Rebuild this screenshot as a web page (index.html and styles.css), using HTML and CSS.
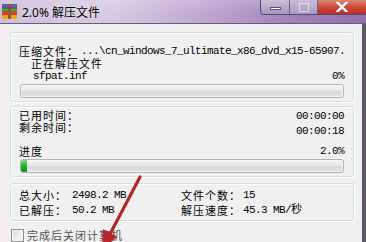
FILE: index.html
```html
<!DOCTYPE html>
<html lang="zh-CN">
<head>
    <meta charset="UTF-8">
    <meta name="viewport" content="width=device-width, initial-scale=1.0">
    <title>2.0% 解压文件</title>
    <link rel="stylesheet" href="styles.css">
</head>
<body>
    <div class="titlebar">
        <svg class="app-icon" width="15" height="15" viewBox="0 0 15 15">
            <rect x="0" y="0" width="15" height="4" fill="#6a5bb5"/>
            <rect x="0" y="4" width="15" height="3" fill="#3fa33a"/>
            <rect x="0" y="7" width="15" height="4" fill="#d2452a"/>
            <rect x="0" y="11" width="15" height="4" fill="#e8a61c"/>
            <rect x="6" y="0" width="3" height="15" fill="#8a5a2b"/>
            <rect x="0" y="3.5" width="15" height="1" fill="#2c2c55" opacity="0.5"/>
        </svg>
        <span class="title">2.0% 解压文件</span>
        <div class="caption-buttons">
            <div class="cap-btn min"><span class="dash"></span></div>
            <div class="cap-btn max"><span class="square"></span></div>
            <div class="cap-btn close">
                <svg width="12" height="10" viewBox="0 0 12 10">
                    <path d="M1.5 0.5 L10.5 9.5 M10.5 0.5 L1.5 9.5" stroke="#fff" stroke-width="2.4" stroke-linecap="square"/>
                </svg>
            </div>
        </div>
    </div>

    <div class="client">
        <div class="group file-group">
            <div class="row archive">
                <span class="label">压缩文件：</span>
                <span class="mono">...\cn_windows_7_ultimate_x86_dvd_x15-65907.</span>
            </div>
            <div class="row status">正在解压文件</div>
            <div class="row current">
                <span class="mono">sfpat.inf</span>
                <span class="mono">0%</span>
            </div>
            <div class="progress"><div class="fill" style="width: 0%"></div></div>
        </div>

        <div class="group time-group">
            <div class="times">
                <div class="time-labels">已用时间：<br>剩余时间：</div>
                <div class="time-values mono">00:00:00<br>00:00:18</div>
            </div>
            <div class="row progress-row">
                <span>进度</span>
                <span class="mono">2.0%</span>
            </div>
            <div class="progress"><div class="fill" style="width: 2%"></div></div>
        </div>

        <div class="group stats-group">
            <span>总大小：</span><span class="mono">2498.2 MB</span>
            <span>文件个数：</span><span class="mono">15</span>
            <span>已解压：</span><span class="mono">50.2 MB</span>
            <span>解压速度：</span><span class="mono">45.3 MB/秒</span>
        </div>

        <label class="shutdown">
            <span class="checkbox"></span>
            <span>完成后关闭计算机</span>
        </label>
    </div>

    <!-- red annotation arrow drawn over the dialog -->
    <svg class="arrow" width="366" height="242" viewBox="0 0 366 242">
        <line x1="140" y1="177" x2="110" y2="234" stroke="#b3262a" stroke-width="3.2" stroke-linecap="round"/>
        <polygon points="102,250 117,237 103,229" fill="#b3262a"/>
    </svg>
</body>
</html>
```

FILE: styles.css
```css
body {
    margin: 0;
    width: 366px;
    height: 242px;
    overflow: hidden;
    position: relative;
    background-color: #f0f0f0;
    font-family: "Noto Sans CJK SC", sans-serif;
    font-size: 11px;
    letter-spacing: 1px;
    color: #000;
}
.titlebar {
    height: 23px;
    display: flex;
    align-items: center;
    border-bottom: 1px solid #6a5a7c;
    letter-spacing: 0;
    background: linear-gradient(180deg, rgba(255, 255, 255, 0.18), rgba(255, 255, 255, 0) 60%),
                linear-gradient(90deg, #cbbdd8 0%, #d7cae1 30%, #c0a8d2 55%, #a083bb 80%, #9070ad 100%);
}
.app-icon {
    margin-left: 2px;
    flex: none;
}
.title {
    margin-left: 5px;
    font-family: "Noto Sans", "Noto Sans CJK SC", sans-serif;
    font-size: 12px;
    text-shadow: 0 0 6px rgba(255, 255, 255, 0.9);
}
.caption-buttons {
    margin-left: auto;
    align-self: flex-start;
    display: flex;
    height: 14px;
    border: 1px solid #584870;
    border-top: none;
    border-right: none;
    border-radius: 0 0 0 4px;
    overflow: hidden;
}
.cap-btn {
    display: flex;
    align-items: center;
    justify-content: center;
}
.cap-btn.min {
    width: 28px;
    background: linear-gradient(180deg, #cbbfd9, #a895bd);
    border-right: 1px solid #6f5f86;
}
.cap-btn.min .dash {
    width: 11px;
    height: 3px;
    margin-top: 3px;
    background: #fff;
    border: 1px solid #5d5070;
    box-sizing: border-box;
}
.cap-btn.max {
    width: 27px;
    background: linear-gradient(180deg, #c8bcd6, #ad9cc2);
    border-right: 1px solid #6f5f86;
}
.cap-btn.max .square {
    width: 8px;
    height: 7px;
    border: 1px solid rgba(255, 255, 255, 0.55);
}
.cap-btn.close {
    width: 48px;
    background: linear-gradient(180deg, #df8a78, #c8493a 50%, #b9301f);
}
.client {
    border-left: 7px solid #f4eef3;
    border-right: 4px solid #5d5862;
    padding: 8px 8px 0 3px;
    height: 218px;
    box-sizing: border-box;
}
.group {
    border: 1px solid #d5dfe5;
    border-radius: 3px;
    box-shadow: inset 1px 1px 0 #fff, 1px 1px 0 #fff;
    padding: 0 8px;
}
.mono {
    font-family: "Liberation Mono", "Noto Sans CJK SC", monospace;
    font-size: 11px;
    letter-spacing: -0.6px;
}
.row {
    display: flex;
    white-space: nowrap;
}
.file-group {
    padding-top: 12px;
    padding-bottom: 3px;
}
.archive {
    height: 12px;
    line-height: 12px;
}
.archive .label {
    width: 62px;
    flex: none;
}
.status {
    height: 12px;
    line-height: 12px;
    padding-left: 12px;
}
.current {
    height: 14px;
    line-height: 14px;
    padding-left: 14px;
    padding-right: 1px;
    justify-content: space-between;
}
.progress {
    margin: 1px 1px 0;
    height: 12px;
    border: 1px solid #b4b4b4;
    border-radius: 3px;
    background: linear-gradient(180deg, #f4f4f4 0%, #e8e8e8 45%, #d9d9d9 55%, #e2e2e2 100%);
    box-shadow: inset 0 0 0 1px rgba(255, 255, 255, 0.6);
    overflow: hidden;
}
.progress .fill {
    height: 100%;
    background: linear-gradient(180deg, #7fe07a, #1fb02a 50%, #0e9a1c);
}
.time-group {
    margin-top: 4px;
    padding-top: 2px;
    padding-bottom: 3px;
}
.times {
    display: flex;
    justify-content: space-between;
    height: 30px;
}
.time-labels {
    line-height: 12px;
}
.time-values {
    line-height: 15px;
    text-align: right;
    padding-right: 1px;
}
.progress-row {
    margin-top: 5px;
    height: 14px;
    line-height: 14px;
    justify-content: space-between;
    padding-right: 1px;
}
.stats-group {
    margin-top: 6px;
    padding-top: 4px;
    padding-bottom: 2px;
    display: grid;
    grid-template-columns: 53px 109px 62px 1fr;
    grid-auto-rows: 15px;
    line-height: 15px;
    white-space: nowrap;
}
.shutdown {
    margin-top: 8px;
    padding-left: 1px;
    display: flex;
    align-items: center;
    color: #505050;
    line-height: 13px;
}
.checkbox {
    width: 11px;
    height: 11px;
    border: 1px solid #8e8f8f;
    background: linear-gradient(135deg, #dcdcdc, #fbfbfb);
    box-shadow: inset 0 0 0 1px #f4f4f4;
    margin-right: 3px;
}
.arrow {
    position: absolute;
    left: 0;
    top: 0;
    pointer-events: none;
}
```
